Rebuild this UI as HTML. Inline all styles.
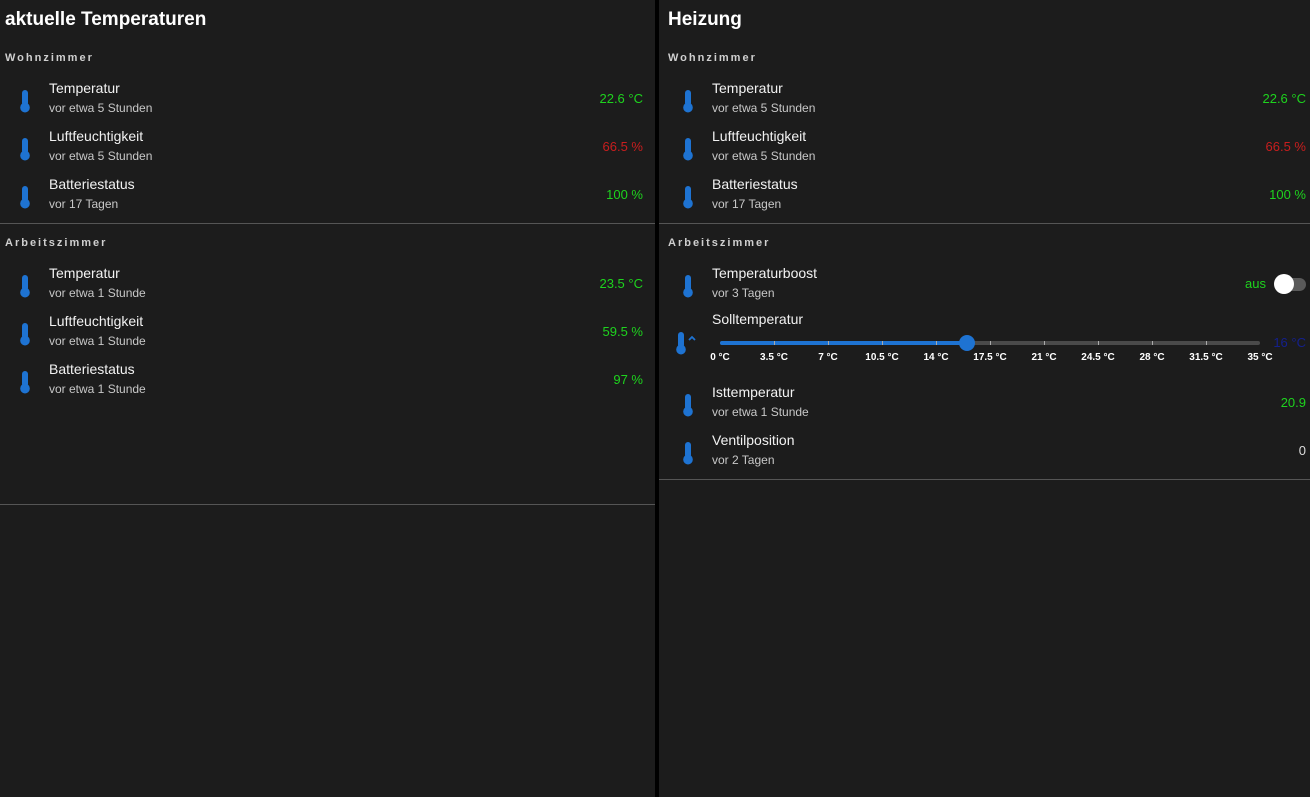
<!DOCTYPE html><html><head><style>
body{margin:0;width:1310px;height:797px;background:#000;font-family:"Liberation Sans",sans-serif;position:relative;overflow:hidden}
.p{position:absolute;top:0;height:797px;background:#1c1c1c}
.a{position:absolute;white-space:nowrap}
.h{font-size:19px;font-weight:bold;color:#fff;top:9px}
.s{font-size:11px;font-weight:bold;color:#cfcfcf;letter-spacing:2px}
.t{font-size:14px;color:#f2f2f2}
.u{font-size:12px;color:#c8c8c8}
.v{font-size:13px;text-align:right}
.g{color:#1ed31e}.r{color:#c81e1e}
.ln{position:absolute;height:1px;background:#555}
.tk{font-size:10px;font-weight:bold;color:#fff;top:352px;transform:translateX(-50%)}
.v:not(.g):not(.r){color:#ddd}
</style></head><body>
<div class="p" style="left:0;width:655px"></div>
<div class="p" style="left:659px;width:651px"></div>
<svg width="0" height="0" style="position:absolute"><defs><symbol id="th" viewBox="0 0 10 24"><rect x="2" y="1" width="6" height="16" rx="3" fill="#1e73d2"/><ellipse cx="5" cy="18.5" rx="4.8" ry="5" fill="#1e73d2"/></symbol></defs></svg>
<div id="L"></div>
<script>
function row(x,y,t,u,v,c,w){return `<svg class="a" style="left:${x+20}px;top:${y+1}px" width="10" height="24"><use href="#th"/></svg><div class="a t" style="left:${x+49}px;top:${y-8}px">${t}</div><div class="a u" style="left:${x+49}px;top:${y+13}px">${u}</div>`+(v?`<div class="a v ${c}" style="right:${1310-w}px;top:${y+3}px">${v}</div>`:'');}
let h='';
h+='<div class="a h" style="left:5px">aktuelle Temperaturen</div><div class="a s" style="left:5px;top:52px">Wohnzimmer</div>';
h+=row(0,88,'Temperatur','vor etwa 5 Stunden','22.6 °C','g',643)+row(0,136,'Luftfeuchtigkeit','vor etwa 5 Stunden','66.5 %','r',643)+row(0,184,'Batteriestatus','vor 17 Tagen','100 %','g',643);
h+='<div class="ln" style="left:0;width:655px;top:223px"></div><div class="a s" style="left:5px;top:237px">Arbeitszimmer</div>';
h+=row(0,273,'Temperatur','vor etwa 1 Stunde','23.5 °C','g',643)+row(0,321,'Luftfeuchtigkeit','vor etwa 1 Stunde','59.5 %','g',643)+row(0,369,'Batteriestatus','vor etwa 1 Stunde','97 %','g',643);
h+='<div class="ln" style="left:0;width:655px;top:504px"></div>';
let o=663;
h+='<div class="a h" style="left:668px">Heizung</div><div class="a s" style="left:668px;top:52px">Wohnzimmer</div>';
h+=row(o,88,'Temperatur','vor etwa 5 Stunden','22.6 °C','g',1306)+row(o,136,'Luftfeuchtigkeit','vor etwa 5 Stunden','66.5 %','r',1306)+row(o,184,'Batteriestatus','vor 17 Tagen','100 %','g',1306);
h+='<div class="ln" style="left:659px;width:651px;top:223px"></div><div class="a s" style="left:668px;top:237px">Arbeitszimmer</div>';
h+=row(o,273,'Temperaturboost','vor 3 Tagen','','',0);
h+='<div class="a v g" style="right:44px;top:276px">aus</div><div class="a" style="left:1276px;top:278px;width:30px;height:13px;border-radius:7px;background:#5a5a5a"></div><div class="a" style="left:1274px;top:274px;width:20px;height:20px;border-radius:50%;background:#fff"></div>';
h+='<div class="a t" style="left:712px;top:311px">Solltemperatur</div>';
h+='<svg class="a" style="left:676px;top:331px" width="24" height="24"><use href="#th" x="0" y="0" width="10" height="24"/><path d="M13 9l3-3 3 3" stroke="#1e73d2" stroke-width="1.8" fill="none"/></svg>';
h+='<div class="a" style="left:720px;top:341px;width:540px;height:4px;background:#4a4a4a;border-radius:2px"></div><div class="a" style="left:720px;top:341px;width:247px;height:4px;background:#1e73d2;border-radius:2px"></div><div class="a" style="left:959px;top:335px;width:16px;height:16px;border-radius:50%;background:#1e73d2"></div>';
const tk=['0 °C','3.5 °C','7 °C','10.5 °C','14 °C','17.5 °C','21 °C','24.5 °C','28 °C','31.5 °C','35 °C'];
tk.forEach((t,i)=>{let x=720+i*54;if(i>0&&i<10)h+=`<div class="a" style="left:${x}px;top:341px;width:1px;height:4px;background:#aaa"></div>`;h+=`<div class="a tk" style="left:${x}px">${t}</div>`});
h+='<div class="a v" style="right:4px;top:335px;color:#14208c !important">16 °C</div>';
h+=row(o,392,'Isttemperatur','vor etwa 1 Stunde','20.9','g',1306)+row(o,440,'Ventilposition','vor 2 Tagen','0','',1306);
h+='<div class="ln" style="left:659px;width:651px;top:479px"></div>';
document.getElementById('L').innerHTML=h;
</script>
</body></html>
